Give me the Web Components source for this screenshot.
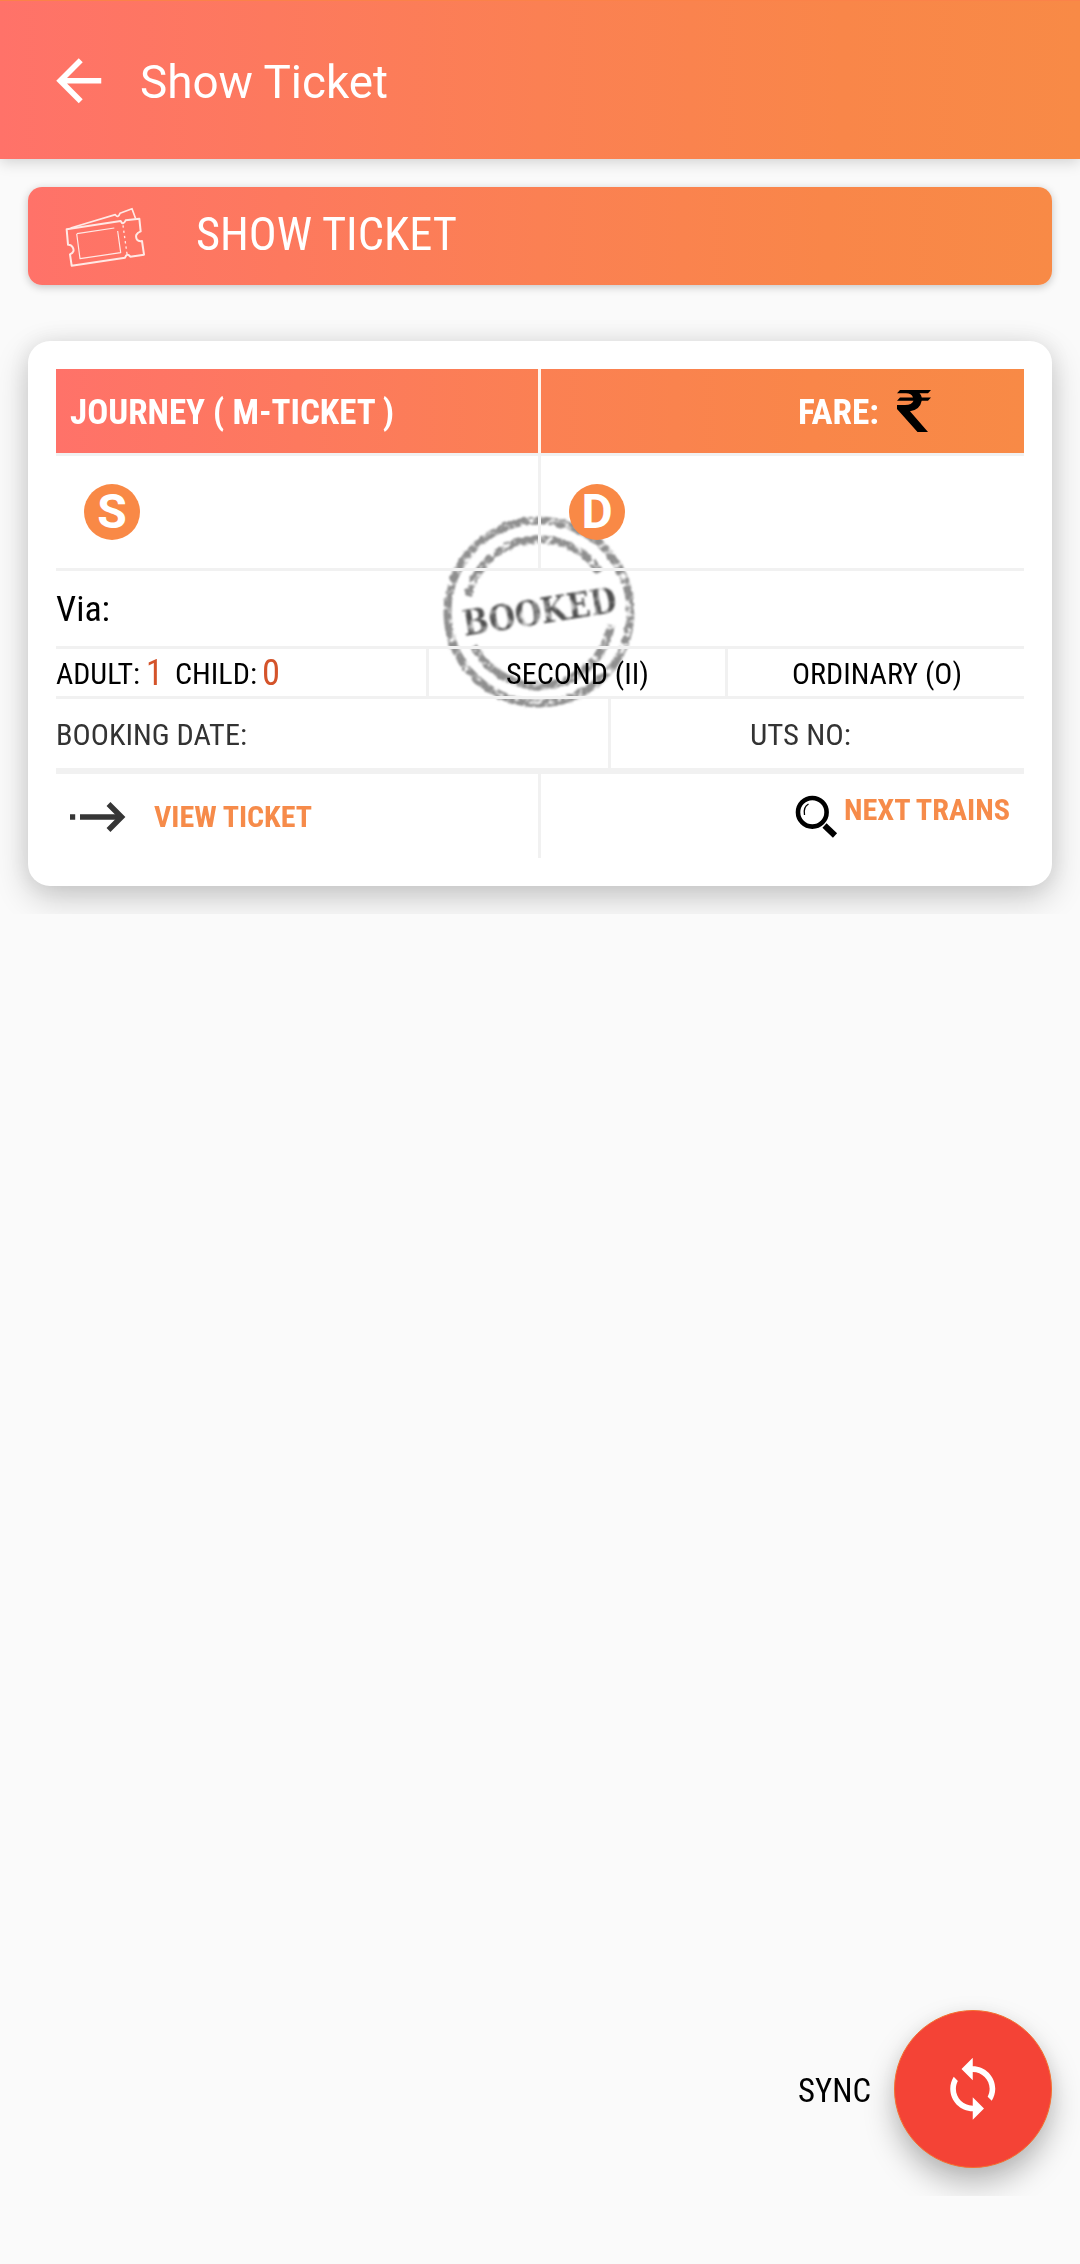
<!DOCTYPE html>
<html lang="en">
<head>
<meta charset="utf-8">
<title>Show Ticket</title>
<style>
  html { --brand: linear-gradient(90deg, #ff7269 0%, #fb8053 50%, #f98649 78%, #f88a46 100%); --rule: #f1f1f1; }
  body { margin: 0; background: #fafafa; font-family: Roboto, "Liberation Sans", sans-serif; color: #000; }
</style>
</head>
<body>
<ticket-screen>
  <app-bar>Show Ticket</app-bar>
  <action-banner>SHOW TICKET</action-banner>
  <ticket-card></ticket-card>
  <sync-fab slot="fab">SYNC</sync-fab>
</ticket-screen>

<script>
const define = (name, html, ready) => customElements.define(name, class extends HTMLElement {
  connectedCallback() {
    if (this.shadowRoot) return;
    const t = document.createElement('template');
    t.innerHTML = html;
    this.attachShadow({ mode: 'open' }).appendChild(t.content.cloneNode(true));
    if (ready) ready.call(this);
  }
});

/* Text condensed to a given advance width (w) at a given size. */
define('cond-text', `
  <style>
    :host { display: block; flex: none; white-space: nowrap; line-height: 1.172; font-stretch: 75%; }
    span { display: inline-block; transform-origin: 0 50%; }
  </style>
  <span><slot></slot></span>`, function () {
  const span = this.shadowRoot.querySelector('span');
  const w = parseFloat(this.getAttribute('w'));
  this.style.fontSize = this.getAttribute('size') + 'px';
  const natural = span.getBoundingClientRect().width;
  this.style.width = w + 'px';
  if (natural) span.style.transform = 'scaleX(' + (w / natural) + ')';
});

define('ticket-screen', `
  <style>
    :host { display: flex; flex-direction: column; height: 2264px; box-sizing: border-box; padding-bottom: 68px; overflow: hidden; background: #fafafa; }
    .fab { margin-top: auto; }
  </style>
  <slot></slot>
  <div class="fab"><slot name="fab"></slot></div>`);

define('app-bar', `
  <style>
    :host { display: flex; align-items: center; height: 159px; box-sizing: border-box; padding: 1px 0 0 45px; background: var(--brand); box-shadow: 0 3px 14px rgba(0,0,0,.17); color: #fff; border-top: 1px solid #fb8249; position: relative; z-index: 1; }
    svg { display: block; margin-right: 27.5px; }
    cond-text { font-stretch: 100%; padding-top: 4px; }
  </style>
  <svg width="67.5" height="67.5" viewBox="0 0 24 24" fill="#fff"><path d="M20 11H7.83l5.59-5.59L12 4l-8 8 8 8 1.41-1.41L7.83 13H20v-2z"/></svg>
  <cond-text size="46.5" w="248"><slot></slot></cond-text>`);

define('action-banner', `
  <style>
    :host { display: flex; align-items: center; height: 98px; margin: 28px 28px 0; border-radius: 14px; box-sizing: border-box; padding-left: 37px; background: var(--brand); color: #fff; box-shadow: 0 2px 8px rgba(0,0,0,.22); position: relative; z-index: 2; }
    svg { display: block; margin: 2px 49px 0 0; }
    cond-text { margin-top: -3px; }
  </style>
  <svg width="82" height="60" viewBox="45 50 246 180" fill="none" stroke="#ffe9e5" stroke-width="6" stroke-linejoin="round">
    <path d="M50 117 212 92q7 14 15-2l41-5 4 38q-20 8-11 25 5 6 15 4l6 41-41 6q-10-13-16 3L65 226l-5-34q16-7 8-21-5-9-14-8z"/>
    <path stroke-width="5" d="M62 113 196 73q8 12 14-4l36-14 11 30"/>
    <path stroke-width="3.500" d="m81 130 112-17M203 122l9 65-122 18-10-75"/>
    <path stroke-width="4" stroke-dasharray="7 9" d="m219 105 12 86"/>
  </svg>
  <cond-text size="46" w="261"><slot></slot></cond-text>`);

define('stamp-mark', `
  <style>:host { display: block; } svg { display: block; overflow: visible; }</style>
  <svg width="194" height="194" viewBox="-97 -97 194 194">
    <defs>
      <filter id="ink" x="-10%" y="-10%" width="120%" height="120%">
        <feTurbulence type="fractalNoise" baseFrequency=".16" numOctaves="2" seed="8" result="n"/>
        <feDisplacementMap in="SourceGraphic" in2="n" scale="4" xChannelSelector="R" yChannelSelector="G" result="d"/>
        <feColorMatrix in="n" type="matrix" values="0 0 0 0 0  0 0 0 0 0  0 0 0 0 0  4 0 0 0 -1.05" result="m"/>
        <feComposite in="d" in2="m" operator="in"/>
        <feGaussianBlur stdDeviation="1.1"/>
      </filter>
      <filter id="type" x="-10%" y="-10%" width="120%" height="120%">
        <feTurbulence type="fractalNoise" baseFrequency=".1" numOctaves="2" seed="3" result="n"/>
        <feColorMatrix in="n" type="matrix" values="0 0 0 0 0  0 0 0 0 0  0 0 0 0 0  2.5 0 0 0 -.35" result="m"/>
        <feComposite in="SourceGraphic" in2="m" operator="in"/>
        <feGaussianBlur stdDeviation="1.2"/>
      </filter>
    </defs>
    <g filter="url(#ink)" fill="none" stroke="#8f8f8f">
      <circle r="91.5" stroke-width="8"/>
      <path stroke-width="8" d="M-71-16A73 73 0 0 1 61-40M72 13A73 73 0 0 1-65 34"/>
    </g>
    <g filter="url(#type)" transform="rotate(-9)">
      <text x="-77" y="12" textLength="155" lengthAdjust="spacingAndGlyphs" font-family="'DejaVu Serif', serif" font-weight="700" font-size="35" fill="#505050">BOOKED</text>
    </g>
  </svg>`);

define('place-badge', `
  <style>:host { display: flex; align-items: center; justify-content: center; width: 56px; height: 56px; border-radius: 50%; background: #f98946; color: #fff; font-weight: 700; font-size: 48px; line-height: 1; }</style>
  <slot></slot>`);

define('ticket-card', `
  <style>
    :host { display: block; padding: 56px 28px 28px; overflow: hidden; }
    .card { position: relative; isolation: isolate; height: 545px; box-sizing: border-box; padding: 28px; border-radius: 22px; background: #fff; box-shadow: 0 12px 34px rgba(0,0,0,.2), 0 0 22px rgba(0,0,0,.07); }
    stamp-mark { position: absolute; left: 414px; top: 174px; z-index: -1; }
    .row { display: flex; box-sizing: border-box; border-bottom: 3px solid var(--rule); }
    .cell { display: flex; align-items: center; box-sizing: border-box; flex: none; }
    .cell + .cell { border-left: 3px solid var(--rule); }
    .half { width: 482px; } .rest { flex: 1; min-width: 0; }
    .head { height: 87px; font-weight: 700; color: #fff; background: var(--brand) 0 0 / 100% 84px no-repeat; }
    .head .cell { height: 84px; padding-top: 3px; }
    .head .cell + .cell { border-color: #fff5ee; }
    .places { height: 115px; } .via { height: 78px; } .people { height: 50px; } .booking { height: 75px; border-bottom-width: 6px; color: #333; }
    .actions { height: 84px; border: 0; font-weight: 700; color: #f68b4a; }
    .num { color: #d4532a; }
    svg { display: block; flex: none; }
  </style>
  <div class="card">
    <stamp-mark></stamp-mark>
    <div class="row head">
      <div class="cell half" style="padding-left:14px"><cond-text size="35" w="324">JOURNEY ( M-TICKET )</cond-text></div>
      <div class="cell rest" style="padding-left:257px">
        <cond-text size="35" w="81">FARE:</cond-text>
        <svg style="margin:-4px 0 0 18px" width="34" height="42" viewBox="0 0 34 42"><path d="M3 0H34L31 3.300H22.500Q24.500 5.200 24.800 7.500H34L31 10.800H24.700Q23 20 13 21.200L31 42H20.500L0 19V15H8Q15 15 16.500 10.800H0L3 7.500H16Q14.500 3.300 9 3.300H0Z"/></svg>
      </div>
    </div>
    <div class="row places">
      <div class="cell half" style="padding-left:28px"><place-badge>S</place-badge></div>
      <div class="cell rest" style="padding-left:28px"><place-badge>D</place-badge></div>
    </div>
    <div class="row via"><div class="cell" style="padding-top:3px"><cond-text size="35" w="54">Via:</cond-text></div></div>
    <div class="row people">
      <div class="cell" style="width:370px;padding-top:2px">
        <cond-text size="30" w="84">ADULT:</cond-text>
        <cond-text class="num" style="margin:0 12px 0 6px" size="36" w="17">1</cond-text>
        <cond-text size="30" w="82">CHILD:</cond-text>
        <cond-text class="num" style="margin-left:5px" size="36" w="18">0</cond-text>
      </div>
      <div class="cell" style="width:299px;justify-content:center;padding-top:2px"><cond-text size="30" w="143">SECOND (II)</cond-text></div>
      <div class="cell rest" style="justify-content:center;padding:2px 0 0 1px"><cond-text size="30" w="170">ORDINARY (O)</cond-text></div>
    </div>
    <div class="row booking">
      <div class="cell" style="width:552px;padding-top:2px"><cond-text size="30" w="191">BOOKING DATE:</cond-text></div>
      <div class="cell rest" style="padding:2px 0 0 139px"><cond-text size="30" w="101">UTS NO:</cond-text></div>
    </div>
    <div class="row actions">
      <div class="cell half" style="padding:2px 0 0 14px">
        <svg width="56" height="32" viewBox="0 0 56 32" fill="none" stroke="#363636" stroke-width="5.5"><path d="M0 16h5.200M10 16h41"/><path d="m38.500 3 13 13-13 13"/></svg>
        <cond-text style="margin-left:28px" size="30" w="158">VIEW TICKET</cond-text>
      </div>
      <div class="cell rest" style="padding:0 0 0 254px">
        <svg width="43" height="43" viewBox="0 0 43 43" fill="none" stroke="#000"><circle cx="17.300" cy="17.300" r="14.300" stroke-width="4.600"/><path stroke-width="1.300" d="M9.500 20q-1.500-8 4-11"/><path stroke-width="6" d="m29.500 30.500 10.500 10"/></svg>
        <cond-text style="margin:-12px 0 0 6px" size="30" w="166">NEXT TRAINS</cond-text>
      </div>
    </div>
  </div>`);

define('sync-fab', `
  <style>
    :host { display: flex; align-items: center; justify-content: flex-end; padding: 50px 28px 28px; overflow: hidden; }
    cond-text { margin-right: 23px; padding-top: 4px; }
    button { all: unset; display: flex; align-items: center; justify-content: center; width: 158px; height: 158px; box-sizing: border-box; border: 1px solid #f4702e; border-radius: 50%; background: #f44336; box-shadow: 0 16px 30px rgba(0,0,0,.26), 0 2px 16px rgba(0,0,0,.05); }
    svg { display: block; }
  </style>
  <cond-text size="34" w="73"><slot></slot></cond-text>
  <button aria-label="Sync"><svg width="67.5" height="67.5" viewBox="0 0 24 24" fill="#fff"><path d="M12 4V1L8 5l4 4V6c3.310 0 6 2.690 6 6 0 1.010-.25 1.970-.7 2.800l1.460 1.460C19.540 15.030 20 13.570 20 12c0-4.420-3.580-8-8-8zm0 14c-3.310 0-6-2.690-6-6 0-1.010.25-1.970.7-2.800L5.240 7.740C4.460 8.970 4 10.430 4 12c0 4.420 3.580 8 8 8v3l4-4-4-4v3z"/></svg></button>`);
</script>
</body>
</html>
